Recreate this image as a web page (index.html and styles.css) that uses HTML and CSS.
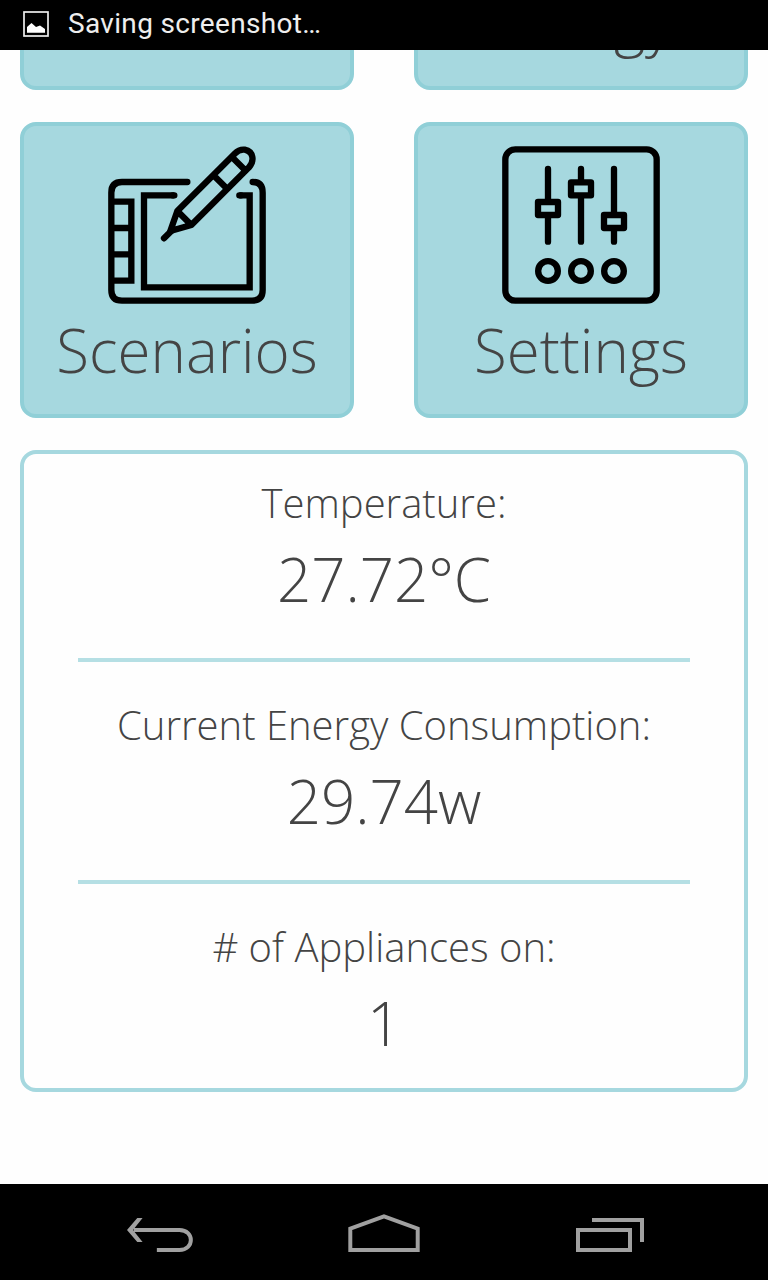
FILE: index.html
```html
<!DOCTYPE html>
<html lang="en">
<head>
<meta charset="utf-8">
<title>Home</title>
<link rel="stylesheet" href="styles.css">
</head>
<body>
<div class="screen">
  <header class="status">
    <svg class="status-icon" viewBox="0 0 26 26"><rect x="1" y="1" width="24" height="24" fill="none" stroke="#eee" stroke-width="1.7"/><path d="M4 21.7V16L8.5 12L13 16L17 14.5L22 18V21.7Z" fill="#fff"/></svg>
    <span class="status-text">Saving screenshot…</span>
  </header>
  <main class="content">
    <div class="row row-scrolled">
      <div class="card"></div>
      <div class="card"><span class="card-label">Energy</span></div>
    </div>
    <div class="row">
      <div class="card">
        <svg class="card-icon" viewBox="24 18 474 474" fill="none" stroke="#000" stroke-width="19">
          <path stroke-linecap="round" d="M262 126H66Q34 126 34 158V450Q34 482 66 482H456Q488 482 488 450V158Q488 126 458 126M192 295L214 273"/>
          <path d="M34 185H94V422H34M34 264H94M34 343H94M223 166H132V442H449V166H418"/>
          <path stroke-linecap="round" d="M223 166H218M418 166H423"/>
          <path stroke-linejoin="round" d="M232 213L404 41Q418 27 434 29Q454 33 457 51Q460 67 447 82L274 255L211 273ZM232 213L274 255M342 107L379 144M395 50L435 90"/>
        </svg>
        <span class="card-label">Scenarios</span>
      </div>
      <div class="card">
        <svg class="card-icon" viewBox="21 18 474 474" fill="none" stroke="#000" stroke-width="19">
          <rect x="31" y="28" width="454" height="454" rx="30"/>
          <path stroke-linecap="round" d="M159 87V180M159 230V305M258 87V120M258 170V305M357 87V220M357 270V305"/>
          <g stroke-linejoin="round"><rect x="129" y="186" width="60" height="39"/><rect x="228" y="127" width="60" height="39"/><rect x="327" y="225" width="60" height="39"/></g>
          <circle cx="159" cy="393" r="29.5"/><circle cx="258" cy="393" r="29.5"/><circle cx="357" cy="393" r="29.5"/>
        </svg>
        <span class="card-label">Settings</span>
      </div>
    </div>
    <section class="panel">
      <div class="stat"><div class="stat-label">Temperature:</div><div class="stat-value">27.72°C</div></div>
      <div class="stat"><div class="stat-label">Current Energy Consumption:</div><div class="stat-value">29.74w</div></div>
      <div class="stat"><div class="stat-label"># of Appliances on:</div><div class="stat-value">1</div></div>
    </section>
  </main>
  <nav class="navbar">
    <svg class="nav-back" viewBox="80 99 199 102"><path d="M100 135H238C284 135 284 195 238 195H170" fill="none" stroke="#a0a0a0" stroke-width="12"/><path d="M80 135L111 99H127L98 135L127 171H111Z" fill="#a0a0a0"/></svg>
    <svg class="nav-home" viewBox="744 86 216 115"><path d="M750 195V130L852 93L954 130V195Z" fill="none" stroke="#a0a0a0" stroke-width="12"/></svg>
    <svg class="nav-recent" viewBox="438 99 204 102"><path d="M444 135H600V195H444ZM486 105H636V171" fill="none" stroke="#a0a0a0" stroke-width="12"/></svg>
  </nav>
</div>
</body>
</html>
```

FILE: styles.css
```css
* { box-sizing: border-box; }
body { margin: 0; background: #fefefe; color: #444; font-family: "Open Sans", sans-serif; font-weight: 300; }
.screen { display: flex; flex-direction: column; height: 1280px; overflow: hidden; }
.status { display: flex; align-items: center; height: 50px; flex: none; padding: 0 23px 2px; background: #000; color: #eee; }
.status-icon { width: 26px; height: 26px; margin-right: 19px; }
.status-text { font: 400 28px/36px Roboto, sans-serif; letter-spacing: 0.33px; }
.content { flex: 1; min-height: 0; padding: 0 20px; overflow: hidden; }
.row { display: flex; justify-content: space-between; margin-bottom: 32px; }
.row-scrolled { height: 40px; align-items: flex-end; overflow: hidden; }
.card { display: flex; flex-direction: column; align-items: center; justify-content: flex-end; flex: none; width: 334px; height: 296px; padding-bottom: 23px; background: #a6d8df; border: 4px solid #90cfd7; border-radius: 16px; }
.card-icon { width: 158px; height: 158px; margin-bottom: 5px; }
.card-label { font-size: 60px; line-height: 82px; }
.panel { height: 642px; padding: 0 54px; border: 4px solid #a6d8df; border-radius: 16px; text-align: center; }
.stat { height: 222px; padding-top: 36px; border-bottom: 4px solid #b5dfe4; }
.stat:first-child { height: 208px; padding-top: 22px; }
.stat:last-child { height: 204px; border-bottom: 0; }
.stat-label { font-size: 40px; line-height: 54px; white-space: nowrap; }
.stat-value { margin-top: 8px; font-size: 60px; line-height: 82px; }
.navbar { display: flex; align-items: flex-end; justify-content: space-between; flex: none; height: 96px; padding: 0 124px 28px 127px; background: #000; }
.nav-back { width: 66px; height: 34px; }
.nav-home { position: relative; left: -0.5px; width: 72px; height: 38px; }
.nav-recent { width: 68px; height: 34px; }
```
